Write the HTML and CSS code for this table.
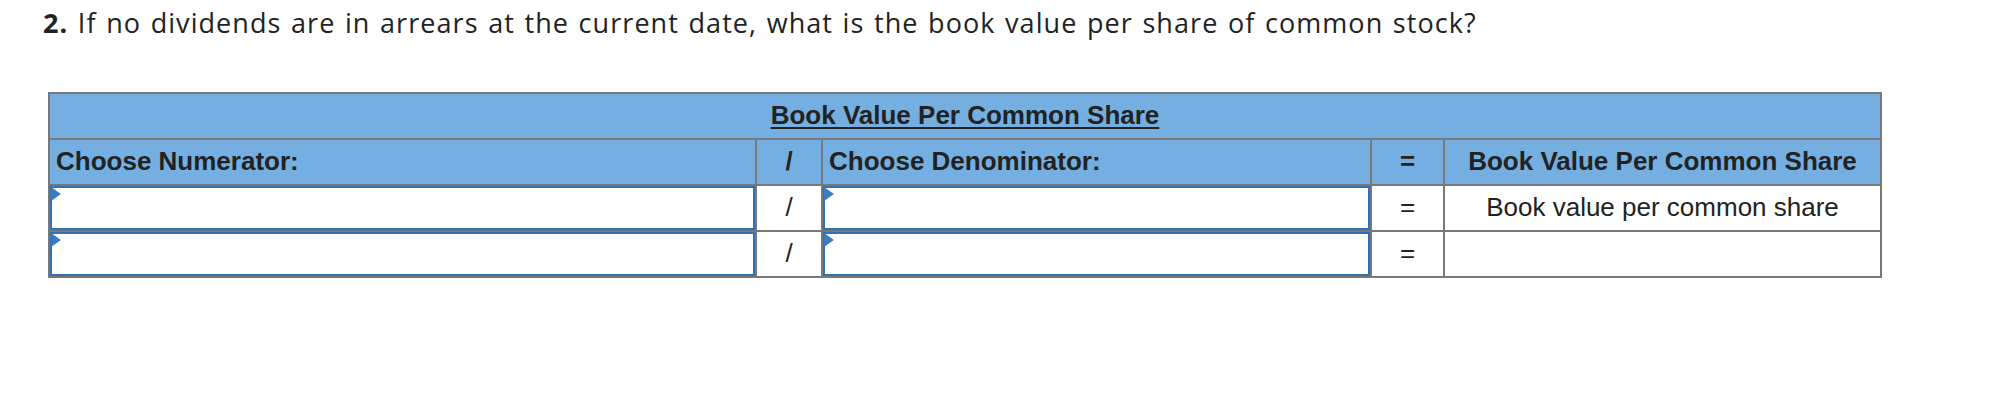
FILE: index.html
```html
<!DOCTYPE html>
<html lang="en">
<head>
<meta charset="utf-8">
<title>Book value per share</title>
<link rel="stylesheet" href="styles.css">
</head>
<body>
<p class="question"><strong>2.</strong> If no dividends are in arrears at the current date, what is the book value per share of common stock?</p>
<div class="sheet">
  <div class="cell head title-cell"><span class="title-text">Book Value Per Common Share</span></div>
  <div class="cell head left">Choose Numerator:</div>
  <div class="cell head center">/</div>
  <div class="cell head left">Choose Denominator:</div>
  <div class="cell head center">=</div>
  <div class="cell head center">Book Value Per Common Share</div>

  <div class="cell input-cell"><div class="input"></div></div>
  <div class="cell center body">/</div>
  <div class="cell input-cell"><div class="input"></div></div>
  <div class="cell center body">=</div>
  <div class="cell center body">Book value per common share</div>

  <div class="cell input-cell"><div class="input"></div></div>
  <div class="cell center body">/</div>
  <div class="cell input-cell"><div class="input"></div></div>
  <div class="cell center body">=</div>
  <div class="cell center body"></div>
</div>
</body>
</html>
```

FILE: styles.css
```css
html, body {
  margin: 0;
  padding: 0;
  background: #ffffff;
}

.question {
  margin: 0;
  padding: 7px 0 0 43px;
  height: 86px;
  box-sizing: border-box;
  font-family: "Open Sans", "Lato", sans-serif;
  font-size: 27px;
  line-height: 32px;
  letter-spacing: 1.06px;
  word-spacing: 1.5px;
  color: #222222;
  white-space: nowrap;
}

.question strong {
  font-weight: 700;
}

.sheet {
  margin: 6px 0 0 48px;
  width: 1834px;
  box-sizing: border-box;
  display: grid;
  grid-template-columns: 705px 64px 547px 71px 435px;
  grid-auto-rows: 44px;
  gap: 2px;
  padding: 2px;
  background: #787878;
  font-family: "Liberation Sans", Arial, sans-serif;
  font-size: 26px;
  color: #222222;
}

.cell {
  display: flex;
  align-items: center;
  background: #ffffff;
  box-sizing: border-box;
  white-space: nowrap;
  padding-bottom: 2px;
}

.head {
  background: #75aee0;
  font-weight: 700;
}

.title-cell {
  grid-column: 1 / -1;
  justify-content: center;
}

.title-text {
  text-decoration: underline;
  text-underline-offset: 3px;
  text-decoration-thickness: 2px;
}

.left {
  padding-left: 6px;
}

.center {
  justify-content: center;
}

.body {
  font-weight: 400;
}

.input-cell {
  align-items: stretch;
  padding-bottom: 0;
}

.input {
  position: relative;
  flex: 1;
  border: 2px solid #2f72b6;
  background: #ffffff;
}

.input::before {
  content: "";
  position: absolute;
  left: -1px;
  top: -1px;
  border-style: solid;
  border-width: 7px 0 7px 10px;
  border-color: transparent transparent transparent #3a7cc2;
}
```
